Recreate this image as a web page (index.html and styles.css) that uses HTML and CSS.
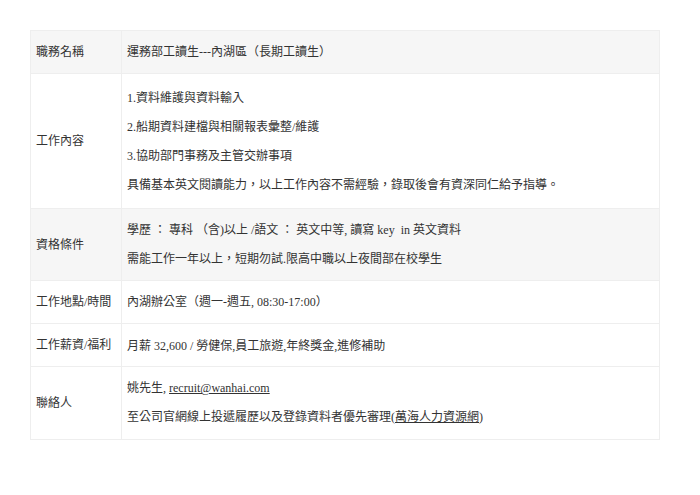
FILE: index.html
```html
<!DOCTYPE html>
<html lang="zh-Hant">
<head>
  <meta charset="UTF-8">
  <meta name="viewport" content="width=device-width, initial-scale=1.0">
  <title>職缺資訊</title>
  <link rel="stylesheet" href="styles.css">
</head>
<body>
  <table class="job-table">
    <tr class="shade">
      <th>職務名稱</th>
      <td>運務部工讀生---內湖區（長期工讀生）</td>
    </tr>
    <tr class="tall">
      <th>工作內容</th>
      <td>
        <p>1.資料維護與資料輸入</p>
        <p>2.船期資料建檔與相關報表彙整/維護</p>
        <p>3.協助部門事務及主管交辦事項</p>
        <p>具備基本英文閱讀能力，以上工作內容不需經驗，錄取後會有資深同仁給予指導。</p>
      </td>
    </tr>
    <tr class="shade">
      <th>資格條件</th>
      <td>
        <p>學歷 ： 專科 （含)以上 /語文 ： 英文中等, 讀寫 key&nbsp; in 英文資料</p>
        <p>需能工作一年以上，短期勿試.限高中職以上夜間部在校學生</p>
      </td>
    </tr>
    <tr>
      <th>工作地點/時間</th>
      <td>內湖辦公室（週一-週五, 08:30-17:00）</td>
    </tr>
    <tr class="short">
      <th>工作薪資/福利</th>
      <td>月薪 32,600 / 勞健保,員工旅遊,年終獎金,進修補助</td>
    </tr>
    <tr class="contact">
      <th>聯絡人</th>
      <td>
        <p>姚先生, <a href="#">recruit@wanhai.com</a></p>
        <p>至公司官網線上投遞履歷以及登錄資料者優先審理(<a href="#">萬海人力資源網</a>)</p>
      </td>
    </tr>
  </table>
</body>
</html>
```

FILE: styles.css
```css
body {
  margin: 0;
  padding: 30px;
  background-color: #fff;
  color: #333;
  font-family: 'Liberation Serif', 'Noto Sans CJK TC', serif;
  font-size: 12px;
}

.job-table {
  width: 630px;
  border-collapse: collapse;
  border: 1px solid #eee;
}

.job-table th,
.job-table td {
  padding: 12px 5px;
  line-height: 18px;
  border: 1px solid #eee;
  text-align: left;
  font-weight: normal;
  vertical-align: middle;
}

.job-table th {
  width: 80px;
  white-space: nowrap;
}

.job-table .shade th,
.job-table .shade td {
  background-color: #f6f6f6;
}

.job-table .tall td {
  padding-top: 15px;
  padding-bottom: 14px;
}

.job-table .short td {
  padding-bottom: 11px;
}

.job-table .contact td {
  padding-bottom: 13px;
}

.job-table p {
  margin: 0;
}

.job-table p + p {
  margin-top: 11px;
}

.job-table a {
  color: #333;
  text-decoration: underline;
}
```
